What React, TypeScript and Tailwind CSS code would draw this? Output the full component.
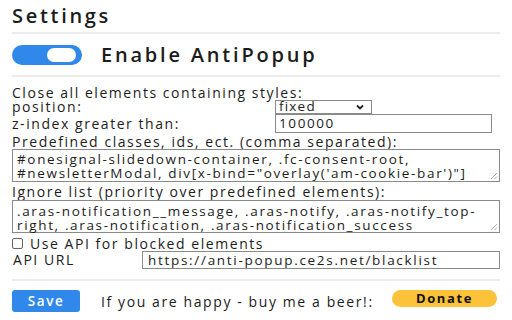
const font = { fontFamily: '"Open Sans", "DejaVu Sans", sans-serif' }

export default function App() {
  return (
    <div className="w-[512px] h-[320px] overflow-hidden bg-white text-[#1c1c1c] px-3" style={font}>
      <div className="h-[34px] border-b-2 border-[#ececec] flex items-start pt-[5px]">
        <h1 className="text-[20px] leading-[22px] font-semibold tracking-[2.7px]">Settings</h1>
      </div>

      <div className="h-[43px] border-b-2 border-[#ececec] flex items-center gap-[19px] pt-[1px]">
        <div className="w-[70px] h-[20px] rounded-full bg-[#2f88ea] flex items-center justify-end pr-[6px]">
          <div className="w-[29px] h-[14px] rounded-full bg-white" />
        </div>
        <span className="text-[20px] leading-none font-semibold tracking-[2.8px]">Enable AntiPopup</span>
      </div>

      <div className="pt-[8px] text-[14px] leading-[15px] tracking-[1.55px]">
        <div className="h-[15px]">Close all elements containing styles:</div>
        <div className="flex h-[14px]">
          <span className="w-[263px] leading-[14px]">position:</span>
          <div className="w-[97px] h-[14px] border border-[#8a8a8a] flex items-center justify-between pl-[3px] pr-[7px] text-[13.5px] leading-none tracking-[1.2px]">
            <span>fixed</span>
            <svg width="8" height="6" viewBox="0 0 8 6">
              <path d="M1 1.5L4 4.5L7 1.5" fill="none" stroke="#222" strokeWidth="1.8" />
            </svg>
          </div>
        </div>
        <div className="flex h-[19px]">
          <span className="w-[263px] pt-[2px]">z-index greater than:</span>
          <div className="w-[217px] h-[19px] border border-[#8a8a8a] flex items-center pl-[3px] text-[13.5px] tracking-[1.6px]">100000</div>
        </div>
        <div className="h-[16px] pt-[1px]">Predefined classes, ids, ect. (comma separated):</div>
        <div className="relative h-[33px] border border-[#8a8a8a] pl-[4px] pt-[2px] text-[13.5px] leading-[14px] tracking-[1.65px]">
          <div>#onesignal-slidedown-container, .fc-consent-root,</div>
          <div>#newsletterModal, div[x-bind="overlay('am-cookie-bar')"]</div>
          <Grip />
        </div>
        <div className="h-[18px] pt-[2px]">Ignore list (priority over predefined elements):</div>
        <div className="relative h-[33px] border border-[#8a8a8a] pl-[4px] pt-[3px] text-[13.5px] leading-[14px] tracking-[1.65px]">
          <div>.aras-notification__message, .aras-notify, .aras-notify_top-</div>
          <div>right, .aras-notification, .aras-notification_success</div>
          <Grip />
        </div>
        <label className="flex items-center gap-[7px] h-[18px] pt-[2px]">
          <span className="w-[11px] h-[11px] border border-[#666] rounded-[2px]" />
          <span>Use API for blocked elements</span>
        </label>
        <div className="flex items-start h-[18px]">
          <span className="w-[130px] pl-[1px] pt-[1px]">API URL</span>
          <div className="flex-1 h-[18px] border border-[#8a8a8a] flex items-center pl-[5px] text-[13.5px] tracking-[1.7px]">https://anti-popup.ce2s.net/blacklist</div>
        </div>
      </div>

      <div className="mt-[10px] border-t-2 border-[#ececec] pt-[9px] flex items-start">
        <button className="w-[68px] h-[22px] rounded-[3px] bg-[#2f88ea] text-white text-[13.5px] font-semibold tracking-[1.6px]">Save</button>
        <span className="ml-[21px] pt-[1px] text-[14px] tracking-[1.6px]">If you are happy - buy me a beer!:</span>
        <button className="ml-auto mr-[3px] w-[105px] h-[17px] rounded-full bg-[#fcc23a] text-[13px] leading-none font-bold text-[#111] tracking-[1.6px]">Donate</button>
      </div>
    </div>
  )
}

function Grip() {
  return (
    <svg className="absolute right-[1px] bottom-[1px]" width="8" height="8" viewBox="0 0 8 8">
      <path d="M7 1L1 7M7 4.5L4.5 7" stroke="#b0b0b0" strokeWidth="1" />
    </svg>
  )
}
